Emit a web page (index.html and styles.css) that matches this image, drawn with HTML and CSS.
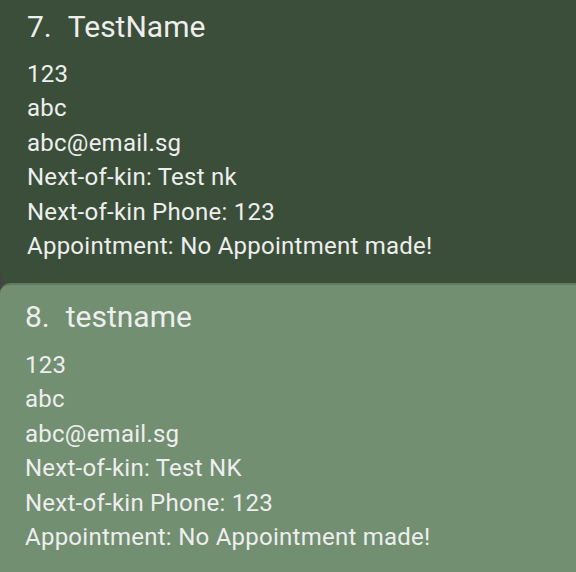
FILE: index.html
```html
<!DOCTYPE html>
<html>
<head>
<meta charset="utf-8">
<link rel="stylesheet" href="styles.css">
</head>
<body>
<div class="list">
  <div class="card card-selected">
    <div class="title"><span class="idx">7.</span><span class="name">TestName</span></div>
    <div class="field">123</div>
    <div class="field">abc</div>
    <div class="field">abc@email.sg</div>
    <div class="field">Next-of-kin: Test nk</div>
    <div class="field">Next-of-kin Phone: 123</div>
    <div class="field">Appointment: No Appointment made!</div>
  </div>
  <div class="card card-plain">
    <div class="title"><span class="idx">8.</span><span class="name">testname</span></div>
    <div class="field">123</div>
    <div class="field">abc</div>
    <div class="field">abc@email.sg</div>
    <div class="field">Next-of-kin: Test NK</div>
    <div class="field">Next-of-kin Phone: 123</div>
    <div class="field">Appointment: No Appointment made!</div>
  </div>
</div>
</body>
</html>
```

FILE: styles.css
```css
html, body {
  margin: 0;
  padding: 0;
  background: #444444;
  overflow: hidden;
}
body {
  width: 576px;
  height: 572px;
  font-family: "Roboto", "Noto Sans", sans-serif;
  color: #eeeeee;
}
.list {
  display: flex;
  flex-direction: column;
}
.card {
  display: flex;
  flex-direction: column;
}
.card-selected {
  background: #3a4e39;
  padding: 8px 0 0 27px;
  height: 275px;
  border-radius: 0 0 0 10px;
}
.card-plain {
  background: #728f72;
  border-top: 2px solid #5f7c5f;
  padding: 13px 0 0 25px;
  height: 290px;
  border-radius: 10px 0 0 10px;
}
.title {
  font-size: 30px;
  line-height: 38px;
  display: flex;
  gap: 16px;
  margin-bottom: 11px;
}
.card-plain .title {
  margin-bottom: 12px;
}
.field {
  font-size: 24px;
  line-height: 34.4px;
  letter-spacing: 0.25px;
}
```
